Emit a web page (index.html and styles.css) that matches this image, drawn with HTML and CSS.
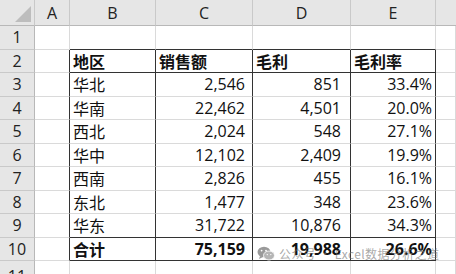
FILE: index.html
```html
<!DOCTYPE html>
<html lang="zh">
<head>
<meta charset="utf-8">
<link rel="stylesheet" href="styles.css">
</head>
<body>
<div class="sheet">
  <div class="grid">
    <div class="ch corner"><span class="tri"></span></div>
    <div class="ch">A</div><div class="ch">B</div><div class="ch">C</div><div class="ch">D</div><div class="ch">E</div><div class="ch last"></div>

    <div class="rh">1</div>
    <div class="c"></div><div class="c bt"></div><div class="c bt"></div><div class="c bt"></div><div class="c bt"></div><div class="c"></div>

    <div class="rh">2</div>
    <div class="c br"></div><div class="c bt br b">地区</div><div class="c bt br b">销售额</div><div class="c bt br b">毛利</div><div class="c bt br b">毛利率</div><div class="c"></div>

    <div class="rh">3</div>
    <div class="c br"></div><div class="c br">华北</div><div class="c br n nc">2,546</div><div class="c br n nd">851</div><div class="c br n ne">33.4%</div><div class="c"></div>

    <div class="rh">4</div>
    <div class="c br"></div><div class="c br">华南</div><div class="c br n nc">22,462</div><div class="c br n nd">4,501</div><div class="c br n ne">20.0%</div><div class="c"></div>

    <div class="rh">5</div>
    <div class="c br"></div><div class="c br">西北</div><div class="c br n nc">2,024</div><div class="c br n nd">548</div><div class="c br n ne">27.1%</div><div class="c"></div>

    <div class="rh">6</div>
    <div class="c br"></div><div class="c br">华中</div><div class="c br n nc">12,102</div><div class="c br n nd">2,409</div><div class="c br n ne">19.9%</div><div class="c"></div>

    <div class="rh">7</div>
    <div class="c br"></div><div class="c br">西南</div><div class="c br n nc">2,826</div><div class="c br n nd">455</div><div class="c br n ne">16.1%</div><div class="c"></div>

    <div class="rh">8</div>
    <div class="c br"></div><div class="c br">东北</div><div class="c br n nc">1,477</div><div class="c br n nd">348</div><div class="c br n ne">23.6%</div><div class="c"></div>

    <div class="rh">9</div>
    <div class="c br"></div><div class="c br bt">华东</div><div class="c br bt n nc">31,722</div><div class="c br bt n nd">10,876</div><div class="c br bt n ne">34.3%</div><div class="c"></div>

    <div class="rh">10</div>
    <div class="c br"></div><div class="c br bt b">合计</div><div class="c br bt b n nc">75,159</div><div class="c br bt b n nd">19,988</div><div class="c br bt b n ne">26.6%</div><div class="c"></div>

    <div class="rh">11</div>
    <div class="c"></div><div class="c"></div><div class="c"></div><div class="c"></div><div class="c"></div><div class="c"></div>
  </div>
  <div class="wm">
    <svg class="wx" width="18" height="15" viewBox="0 0 18 15">
      <ellipse cx="7" cy="6" rx="6.5" ry="5.3" fill="#9a9a9a"/>
      <path d="M3 10 L2 13 L6 11 Z" fill="#9a9a9a"/>
      <ellipse cx="12" cy="9.5" rx="5.5" ry="4.5" fill="#b5b5b5" stroke="#fff" stroke-width="0.8"/>
      <circle cx="4.6" cy="4.6" r="0.9" fill="#fff"/>
      <circle cx="9" cy="4.6" r="0.9" fill="#fff"/>
      <circle cx="10.3" cy="8.6" r="0.7" fill="#fff"/>
      <circle cx="13.8" cy="8.6" r="0.7" fill="#fff"/>
    </svg>
    <span>公众号 · Excel数据分析之道</span>
  </div>
</div>
</body>
</html>
```

FILE: styles.css
```css
html, body {
  margin: 0;
  padding: 0;
  background: #ffffff;
}
.sheet {
  position: relative;
  width: 456px;
  height: 274px;
  overflow: hidden;
  font-family: "Open Sans", "Noto Sans CJK SC", sans-serif;
  font-size: 16px;
  color: #111;
}
.grid {
  display: grid;
  grid-template-columns: 35px 35px 86px 97px 98px 85px 20px;
  grid-template-rows: 26px repeat(10, 23.5px) 30px;
}
.grid > div {
  box-sizing: border-box;
  border-right: 1px solid #dadada;
  border-bottom: 1px solid #dadada;
  display: flex;
  align-items: center;
  white-space: nowrap;
  overflow: hidden;
  line-height: 1;
}
.grid > .ch {
  background: #e6e6e6;
  border-right-color: #c9c9c9;
  border-bottom-color: #b8b8b8;
  justify-content: center;
  color: #222;
  padding-top: 1px;
}
.grid > .ch.last {
  border-right: none;
}
.corner {
  position: relative;
}
.tri {
  position: absolute;
  right: 3px;
  bottom: 3px;
  width: 0;
  height: 0;
  border-left: 16px solid transparent;
  border-bottom: 16px solid #bdbdbd;
}
.grid > .rh {
  background: #e6e6e6;
  border-right-color: #b8b8b8;
  border-bottom-color: #c9c9c9;
  justify-content: center;
  color: #222;
}
.c {
  padding-left: 3px;
  font-family: "Noto Sans CJK SC", sans-serif;
}
.grid > .bt {
  border-bottom-color: #333;
}
.grid > .br {
  border-right-color: #333;
}
.b {
  font-weight: bold;
}
.n {
  justify-content: flex-end;
  font-family: "Open Sans", sans-serif;
}
.nc { padding-right: 7px; }
.nd { padding-right: 9px; }
.ne { padding-right: 3px; }
.wm {
  position: absolute;
  left: 257px;
  top: 245px;
  display: flex;
  align-items: center;
  gap: 4px;
  font-family: "Noto Sans CJK SC", sans-serif;
  font-size: 12px;
  letter-spacing: 0.4px;
  color: rgba(110, 110, 110, 0.6);
}
.wx {
  display: block;
}
```
